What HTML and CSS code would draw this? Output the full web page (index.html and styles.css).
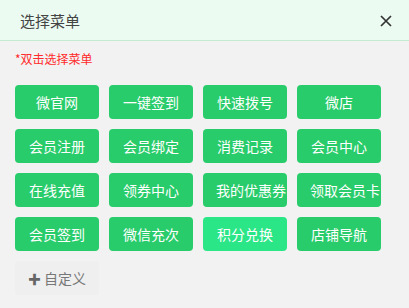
FILE: index.html
```html
<!DOCTYPE html>
<html lang="zh-CN">
<head>
  <meta charset="UTF-8" />
  <meta name="viewport" content="width=device-width, initial-scale=1" />
  <title>选择菜单</title>
  <link rel="stylesheet" href="styles.css">
</head>
<body>
  <div class="dialog">
    <div class="dialog-header">
      <span class="dialog-title">选择菜单</span>
      <button class="dialog-close" aria-label="关闭">
        <svg width="12" height="12" viewBox="0 0 12 12">
          <path d="M1 1 L11 11 M11 1 L1 11" stroke="#333" stroke-width="1.7" fill="none" />
        </svg>
      </button>
    </div>
    <div class="dialog-body">
      <div class="hint">*双击选择菜单</div>
      <div class="menu-grid">
        <div class="menu-item">微官网</div>
        <div class="menu-item">一键签到</div>
        <div class="menu-item">快速拨号</div>
        <div class="menu-item">微店</div>
        <div class="menu-item">会员注册</div>
        <div class="menu-item">会员绑定</div>
        <div class="menu-item">消费记录</div>
        <div class="menu-item">会员中心</div>
        <div class="menu-item">在线充值</div>
        <div class="menu-item">领券中心</div>
        <div class="menu-item">我的优惠券</div>
        <div class="menu-item">领取会员卡</div>
        <div class="menu-item">会员签到</div>
        <div class="menu-item">微信充次</div>
        <div class="menu-item active">积分兑换</div>
        <div class="menu-item">店铺导航</div>
        <div class="menu-item custom"><span class="plus">✚</span>自定义</div>
      </div>
    </div>
  </div>
</body>
</html>
```

FILE: styles.css
```css
:root {
  --green: #28cc6a;
  --green-active: #2ae687;
  --header-bg: #ebfbf1;
  --header-border: #c4ead2;
  --body-bg: #f2f2f2;
  --text-color: #333;
}

html, body {
  margin: 0;
  padding: 0;
}

body {
  font-family: "Noto Sans CJK SC", "Noto Sans", sans-serif;
  background: var(--body-bg);
  color: var(--text-color);
  width: 409px;
  height: 308px;
  overflow: hidden;
}

.dialog-header {
  height: 41px;
  box-sizing: border-box;
  background: var(--header-bg);
  border-bottom: 1px solid var(--header-border);
  display: flex;
  align-items: center;
  justify-content: space-between;
  padding: 0 17px 0 20px;
}

.dialog-title {
  font-size: 15px;
  color: #444;
}

.dialog-close {
  background: none;
  border: none;
  padding: 0;
  width: 12px;
  height: 12px;
  display: flex;
  cursor: pointer;
  margin-top: 2px;
}

.dialog-body {
  padding: 9px 15px 0 15px;
}

.hint {
  font-size: 12px;
  color: #ff2a2a;
  line-height: 17px;
  margin-bottom: 18px;
}

.menu-grid {
  display: grid;
  grid-template-columns: repeat(4, 84px);
  grid-auto-rows: 34px;
  column-gap: 10px;
  row-gap: 10px;
}

.menu-item {
  background: var(--green);
  color: #fff;
  font-size: 14px;
  line-height: 34px;
  padding: 0 13px;
  border-radius: 4px;
  text-align: center;
  white-space: nowrap;
  overflow: hidden;
  cursor: pointer;
}

.menu-item.active {
  background: var(--green-active);
}

.menu-item.custom {
  background: #efefef;
  color: #777;
}

.plus {
  font-size: 13px;
  color: #666;
  margin-right: 3px;
}
```
